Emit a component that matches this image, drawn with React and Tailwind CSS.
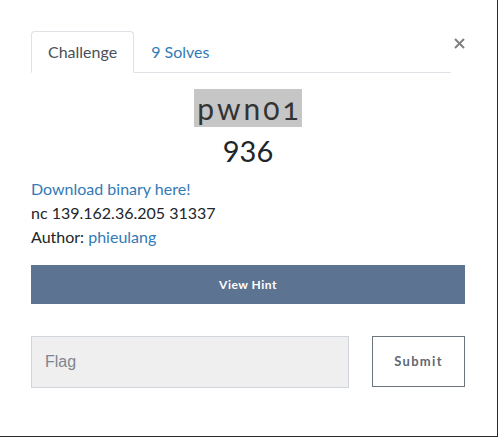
export default function App() {
  return (
    <div className="w-[498px] h-[437px] bg-[#2a2a2a] relative overflow-hidden" style={{ fontFamily: "Lato, 'Liberation Sans', sans-serif" }}>
      <div className="absolute right-0 top-0 w-[1px] h-[30px] bg-[#5a1426]" />
      <div className="w-[497px] h-[436px] bg-white px-[31px] pr-[32px] flex flex-col">
        <div className="flex items-start mt-[31px]">
          <div className="flex-1 flex border-b border-[#dee2e6] h-[42px]">
            <div className="h-[42px] -mb-px px-[16px] border border-[#dee2e6] border-b-white rounded-t-[4px] bg-white flex items-center text-[16px] text-[#495057]">
              Challenge
            </div>
            <div className="h-[41px] px-[17px] flex items-center text-[16px] text-[#337ab7]">9 Solves</div>
          </div>
          <div className="w-[14px] flex justify-end pt-[7px]">
            <svg width="11" height="11" viewBox="0 0 11 11">
              <path d="M1 1L10 10M10 1L1 10" stroke="#808080" strokeWidth="2" />
            </svg>
          </div>
        </div>
        <div className="flex flex-col items-center mt-[16px] text-[#212529]">
          <span className="bg-[#c6c6c6] text-[30px] leading-[38px] tracking-[3px] pl-[3px] pr-[0px] oldstyle-nums text-[#333]">pwn01</span>
          <span className="text-[29px] leading-[36px] mt-[6px]">936</span>
        </div>
        <div className="mt-[8px] text-[16px] leading-[24px] text-[#212529]">
          <div className="text-[#337ab7]">Download binary here!</div>
          <div>nc 139.162.36.205 31337</div>
          <div>Author: <span className="text-[#337ab7]">phieulang</span></div>
        </div>
        <div className="mt-[16px] h-[39px] bg-[#5c7391] flex items-center justify-center text-white text-[12px] font-bold tracking-[0.5px]">
          View Hint
        </div>
        <div className="mt-[32px] flex items-start justify-between">
          <div className="w-[318px] h-[52px] bg-[#efefef] border border-[#d0d6dc] flex items-center pl-[13px] text-[16px] text-[#7d868f]" style={{ fontFamily: "'Liberation Sans', Arial, sans-serif" }}>
            Flag
          </div>
          <div className="w-[93px] h-[51px] border border-[#6c757d] flex items-center justify-center text-[13px] font-bold text-[#5f6a75] tracking-[1.3px]">
            Submit
          </div>
        </div>
      </div>
    </div>
  );
}
